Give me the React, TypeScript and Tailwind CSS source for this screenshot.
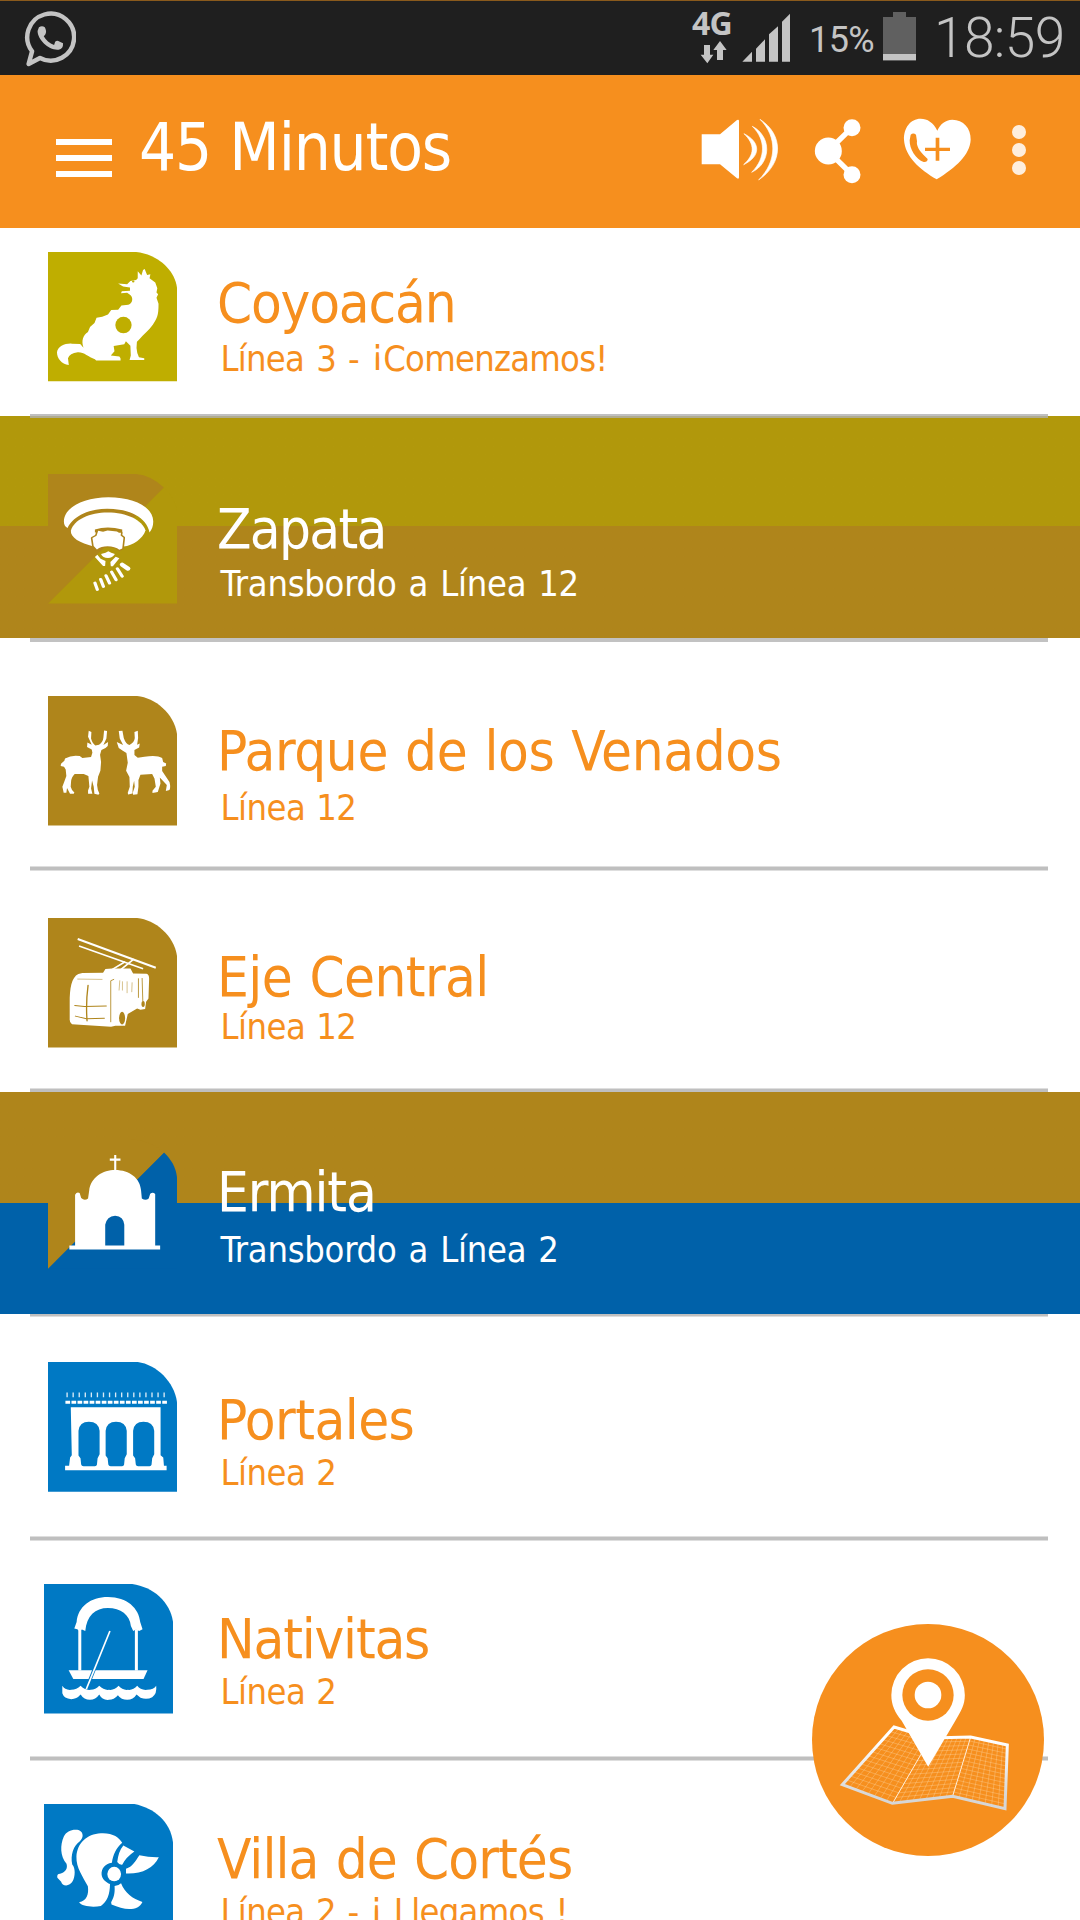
import type { ReactNode } from "react";

const GOLD = "#af851b";
const OLIVE = "#b1980b";
const NAVY = "#0061a9";
const BLUE = "#0079c4";
const ORANGE = "#f68f1e";

type Pt = [number, number];

function Tile({ box, children }: { box: string; children: ReactNode }) {
  return (
    <svg viewBox={box} preserveAspectRatio="none" className="block h-[129.500px] w-[129.500px]">
      {children}
    </svg>
  );
}

function CoyoteIcon() {
  return (
    <Tile box="117 96 317.5 390">
      <path d="M117 96H333C388 103 434 155 434 217V485H117Z" fill="#bfae00" />
      <path
        fill="#fff"
        d="M354 147L360 165L368 163L366 175L380 188L385 205L383 218L387 223L383 234L388 252C388 290 384 296 374 315C364 333 352 342 340 360L335 366L334 385Q335 402 340 413L353 416V421H317L320 408L319 378L308 365L304 374L278 379L280 395L271 408L292 411Q296 415 295 423H235L232 419C216 412 205 397 190 398Q170 401 166 416L168 436C150 434 139 416 139 398C141 380 158 371 175 372L196 373L204 384C198 363 203 347 215 337L220 322L231 310L236 294L250 291L264 284L272 271L289 270L297 257L314 255C326 250 326 232 318 225L311 219L296 220L298 214L318 213V203L301 200L289 191L311 193L319 183L333 180L337 175V154L346 167L350 150Z"
      />
      <ellipse cx="302" cy="316" rx="20" ry="25" fill="#bfae00" />
      <circle cx="326" cy="185" r="3" fill="#bfae00" />
    </Tile>
  );
}

const FACE =
  "M240 272L252 275L263 271L286 274L291 278H296L295 286L302 293L299 325L292 329C280 316 250 314 237 328L229 318L226 294L236 287Z";

function ZapataIcon() {
  return (
    <Tile box="117 101 317.5 390">
      <path d="M401 142C425 170 434 200 434 222V491H117Z" fill={OLIVE} />
      <path d="M117 101H333Q370 105 401 142L117 491Z" fill={GOLD} />
      <g fill="#fff">
        <path d="M156 245C155 202 205 171 265 171C330 171 376 202 375 245C375 258 372 268 366 277C358 232 318 206 262 206C210 206 175 235 165 264C158 260 156 252 156 245Z" />
        <path d="M173 272C180 238 220 217 263 217C310 217 348 240 356 271C350 295 325 317 302 319L229 319C195 310 172 292 173 272Z" />
      </g>
      <path d={FACE} fill={GOLD} stroke={GOLD} strokeWidth="8" strokeLinejoin="round" />
      <path d="M232 268Q262 256 299 268V277H232Z" fill={GOLD} />
      <g fill="#fff">
        <path d={FACE} />
        <path d="M247 342L258 338L265 334L272 338L281 342Q275 354 264 354Q251 354 247 342Z" />
        <path d="M232 351L238 344L246 356L258 363L257 378L252 378Z" />
        <path d="M283 350L292 355L276 379H271L270 366Z" />
      </g>
      <g stroke="#fff" strokeWidth="8" strokeLinecap="round">
        <path d="M232 429L238 449M246 418L253 440M259 407L268 430M273 396L284 420M287 386L299 409" />
        <path d="M299 374L313 386" strokeWidth="12" />
      </g>
    </Tile>
  );
}

function DeerIcon() {
  return (
    <Tile box="143 78 388 388">
      <path d="M143 78H410C470 84 531 140 531 210V466H143Z" fill={GOLD} />
      <g fill="#fff">
        <path d="M265 182L273 186L272 205Q276 220 285 226L296 224Q308 215 309 202L311 181L320 183L318 205L309 225L323 216L322 228Q316 236 303 240L299 254L302 276L300 302L293 320L290 345Q291 361 297 370L294 374L282 371L280 350L275 331L272 355L276 371H263V361L267 350L264 318L250 312H223Q213 321 212 336L211 350Q214 362 222 367L220 371H209L200 354L198 368H190L186 350L192 334L198 318L196 298L191 290L181 288L182 281L192 272L194 265Q215 254 238 258L246 264L272 261L276 248L274 238L260 231L261 217L274 224L263 200Z" />
        <path d="M355 183L366 182L370 204Q376 222 387 225Q402 217 403 204L402 186L412 182L413 204L410 224L418 220L416 232L402 240L402 255L412 263L432 260Q470 254 485 264L488 276L497 280L496 288L485 290V303L498 322L507 336Q511 352 507 360L496 363L499 345L478 322L480 340L472 366L456 369V362L466 350L462 325L455 312L420 314L414 330V350L411 372L398 374L397 368L403 350L401 332L397 350L396 370L383 373L382 368L388 350L387 321L377 302L382 278L378 249L366 241L355 234L349 216L368 225L358 205Z" />
      </g>
    </Tile>
  );
}

function BusIcon() {
  return (
    <Tile box="143 84 388 388">
      <path d="M143 84H410C470 90 531 146 531 216V472H143Z" fill={GOLD} />
      <g stroke="#fff" fill="none">
        <path d="M232 147L466 233" strokeWidth="6" />
        <path d="M236 168L428 236" strokeWidth="5" />
        <path d="M400 207L362 238M374 215L336 238" strokeWidth="5" />
      </g>
      <path
        fill="#fff"
        d="M208 338C208 296 213 262 234 252L246 249L308 248L315 237L335 235H390L398 250L438 251Q446 253 446 266L444 325L437 335L434 357L420 359L410 355L382 372L374 407H345L332 410L215 402Q207 398 208 385Z"
      />
      <g stroke={GOLD} fill="none" strokeLinecap="round">
        <path d="M263 286Q256 340 260 392" strokeWidth="4" />
        <path d="M223 346L252 349L318 348M225 378L258 386L312 384" strokeWidth="3" />
        <path d="M232 267L305 268" strokeWidth="1.5" />
        <path d="M340 268L331 272V395" strokeWidth="2.5" />
        <path d="M358 272L356 300M366 275V300M380 275V308M395 278L394 305" strokeWidth="1.5" />
        <path d="M414 266V322M425 265L427 332" strokeWidth="2.5" />
      </g>
      <ellipse cx="365" cy="384" rx="9" ry="19" fill={GOLD} />
      <ellipse cx="428" cy="342" rx="5" ry="9" fill={GOLD} />
    </Tile>
  );
}

function ChapelIcon() {
  return (
    <Tile box="124 57 339.5 390">
      <path d="M428 98C450 122 463 150 463 188V447H124Z" fill={NAVY} />
      <path d="M124 57H340Q400 65 428 98L124 448Z" fill={GOLD} />
      <path
        fill="#fff"
        d="M297.500 152V105H303V152ZM286 115.500H314V122.500H286ZM180 378H195V225Q200 215 207 220L211 235Q220 244 229 236L232 212C236 172 268 150 300 150C338 150 366 175 368 212L370 236Q380 244 388 236L392 222Q399 216 405 223V378H418V390H180Z"
      />
      <path d="M274 378V315Q278 290 300 288Q322 290 324 315V378Z" fill={NAVY} />
    </Tile>
  );
}

function PortalesIcon() {
  return (
    <Tile box="144 97 386.500 386.500">
      <path d="M144 97H412C472 105 530 165 530 232V484H144Z" fill={BLUE} />
      <path d="M199 195H500" stroke="#fff" strokeOpacity="0.850" strokeWidth="14" strokeDasharray="4 14.100" />
      <path d="M196 217H499" stroke="#fff" strokeWidth="9" strokeDasharray="14 4.060" />
      <path
        d="M212 232H480V375L488 382L490 407H498V420H195V407H207L210 382L215 375Z"
        fill="#fff"
      />
      {[0, 81, 163].map((dx) => (
        <path
          key={dx}
          transform={`translate(${dx} 0)`}
          d="M235 302Q238 275 266 275Q295 275 298 302V372L292 384L290 404Q289 408 284 408H250Q244 408 243 403L241 384L235 376Z"
          fill={BLUE}
        />
      ))}
    </Tile>
  );
}

function BoatIcon() {
  return (
    <Tile box="130 72 389 389">
      <path d="M130 72H395C465 82 519 135 519 205V461H130Z" fill={BLUE} />
      <g fill="#fff">
        <path d="M221 206L228 186C232 140 270 111 322 111C380 111 415 145 419 186L426 208L416 213L406 209L398 213L391 198C388 165 360 144 322 144C284 144 258 168 254 213L244 209L236 213L230 208Z" />
        <path d="M233 208H242V332H233ZM403 208H412V332H403Z" />
        <path d="M204 331H441L429 357H218Z" />
        <path d="M185 378Q193 392 212 390Q228 390 240 378Q252 392 270 390Q285 390 296 378Q310 392 325 390Q342 392 354 378Q366 392 382 390Q398 392 410 378Q420 392 440 390Q460 390 467 378Q470 402 455 412Q440 420 420 414L408 404Q398 420 380 420Q362 420 352 406Q340 420 325 420Q305 422 296 404Q285 420 268 420Q250 420 240 404Q228 418 212 418Q190 416 185 400Z" />
      </g>
      <path d="M281 328L268 360" stroke={BLUE} strokeWidth="10" />
      <path d="M328 213L257 388" stroke="#fff" strokeWidth="5" />
    </Tile>
  );
}

function HelmetIcon() {
  return (
    <Tile box="113 192 339.500 390">
      <path d="M113 192H350C405 205 452 250 452 325V582H113Z" fill={BLUE} />
      <g fill="#fff">
        <path d="M205 271C217 277 217 294 207 304C190 318 182 345 187 374C196 385 195 410 188 425C180 442 160 440 158 426L148 414Q146 402 155 402C172 396 175 385 172 372C155 350 155 315 165 290C172 274 188 267 205 271Z" />
        <path d="M262 280C292 278 310 292 318 309C302 325 294 345 291 369C272 372 263 388 264 404C265 418 276 428 286 433C286 465 278 487 262 499C240 504 212 500 205 488C225 484 231 465 228 440C215 410 197 385 198 350C200 310 225 282 262 280Z" />
        <ellipse cx="297" cy="403" rx="18" ry="22" />
        <path d="M321 317L350 335Q328 352 318 375Q310 376 305 367Q308 335 321 317Z" />
        <path d="M363 346Q390 353 414 352C400 385 370 403 328 401L328 387C345 380 352 365 363 346Z" />
        <path d="M298 439Q310 438 315 431C325 460 345 478 371 487C360 515 325 513 290 495L289 488C298 470 299 455 298 439Z" />
      </g>
    </Tile>
  );
}

function StatusBar() {
  return (
    <div className="flex h-[75px] shrink-0 items-start border-t border-[#8a5a1c] bg-[#1f1f1f] text-[#c4c4c4]">
      <svg
        viewBox="72.6 30 151 171"
        preserveAspectRatio="none"
        className="ml-6 mt-[10px] h-[57px] w-[52px]"
        fill="#c4c4c4"
      >
        <path d="M96 151A68 70.500 0 1 1 119 171L86 189Z" fill="none" stroke="#c4c4c4" strokeWidth="13" strokeLinejoin="round" />
        <path d="M116 79Q125 72 133 79Q140 92 134 101L130 106C136 118 147 128 160 132L163 122Q168 118 172 120L186 127Q187 144 173 146C145 149 112 116 112 90Z" />
      </svg>
      <div className="ml-auto mt-[9px] flex w-[50px] flex-col">
        <span className="font-['Noto_Sans',sans-serif] text-[32px] font-bold leading-[26px] tracking-[-0.8px]">4G</span>
        <svg viewBox="120 120 84 72" className="ml-2 mt-1 h-6 w-7" fill="#c4c4c4">
          <path d="M132 135H150V164H160L142 190L122 164H132ZM171 180V150H160L180 123L200 150H189V180Z" />
        </svg>
      </div>
      <svg viewBox="246 39 147 147" className="mt-3 h-[49px] w-[49px]" fill="#c4c4c4">
        <path d="M247 185L276 155V185ZM288 185V146L315 118V185ZM327 185V103L354 79V185ZM366 185V65L390 41V185Z" />
      </svg>
      <span className="ml-[18px] mt-[17px] w-[74px] font-['Roboto',sans-serif] text-[36px] leading-[44px] tracking-[-0.6px]">15%</span>
      <div className="mt-[11px] flex w-[33px] flex-col items-center">
        <div className="h-[5px] w-[13px] bg-[#606060]" />
        <div className="flex h-11 w-full flex-col justify-end bg-[#606060] pb-px">
          <div className="h-[6px] bg-[#c4c4c4]" />
        </div>
      </div>
      <span className="ml-[18px] mt-[7px] w-[146px] font-['Roboto',sans-serif] text-[55px] font-light leading-[60px] tracking-[-0.6px]">
        18:59
      </span>
    </div>
  );
}

function Header() {
  return (
    <header className="flex h-[153px] shrink-0 items-start bg-[#f68f1e] pl-14 pr-[54px]">
      <div className="mt-16 flex w-14 flex-col gap-[10px]">
        <div className="h-[6px] bg-white" />
        <div className="h-[6px] bg-white" />
        <div className="h-[6px] bg-white" />
      </div>
      <h1 className="ml-[27px] mt-[35px] whitespace-nowrap text-[65px] leading-[76px] tracking-[-1.2px] text-white [word-spacing:1px]">
        45 Minutos
      </h1>
      <svg viewBox="120 355 240 190" className="ml-auto mt-[43px] h-[63.300px] w-20" fill="#fff">
        <path d="M125 404H180L231 361Q237 358 237 364V533Q237 539 231 536L180 494H125Z" />
        <path d="M252 402C303 428 303 470 251 495C284 465 286 435 252 402Z" stroke="#fff" strokeWidth="2" />
        <path d="M277 380C335 410 335 490 275 518C318 475 318 420 277 380Z" stroke="#fff" strokeWidth="2" />
        <path d="M300 359C371 405 371 490 296 541C352 485 352 410 300 359Z" stroke="#fff" strokeWidth="2" />
      </svg>
      <svg viewBox="459 352 150 204" className="ml-[33px] mt-[42px] h-[68px] w-[50px]" fill="#fff">
        <path d="M576 384L504 454L576 525" fill="none" stroke="#fff" strokeWidth="16" />
        <circle cx="505" cy="454" r="40.500" />
        <circle cx="576" cy="384" r="25.500" />
        <circle cx="576" cy="525" r="25.500" />
      </svg>
      <svg viewBox="729 352 207 192" className="ml-10 mt-[42px] h-16 w-[69px]">
        <path
          fill="#fff"
          d="M832 393C820 368 802 357 782 357C751 357 731 385 732 420C735 470 778 508 830 539C888 503 930 465 932 420C933 385 910 360 877 360C855 361 840 374 832 393Z"
        />
        <path d="M752 405Q760 398 768 405L771 425C768 438 780 456 790 465L803 478Q803 488 791 487C768 480 748 448 749 422Z" fill={ORANGE} />
        <path d="M827 414H838V483H827ZM795 444H870V454H795Z" fill={ORANGE} />
      </svg>
      <div className="ml-10 mt-[50px] flex w-[14px] flex-col gap-1">
        <div className="h-[14px] w-[14px] rounded-full bg-white/85" />
        <div className="h-[14px] w-[14px] rounded-full bg-white/85" />
        <div className="h-[14px] w-[14px] rounded-full bg-white/85" />
      </div>
    </header>
  );
}

type Station = {
  name: string;
  detail: ReactNode;
  icon: ReactNode;
  row: string;
  iconPos: string;
  textPos: string;
  nameStyle: string;
  detailStyle: string;
  divider?: string;
};

const THICK = "bottom-0 h-[5px] border-y border-[#dedede] bg-[#bfbfbf]";

/* Inverted exclamation mark raised to stand on the baseline. */
function Opening() {
  return <span className="relative -top-[7px]">¡</span>;
}

const stations: Station[] = [
  {
    name: "Coyoacán",
    detail: (
      <>
        Línea 3 - <Opening />Comenzamos!
      </>
    ),
    icon: <CoyoteIcon />,
    row: "h-[188px] text-[#f68f1e]",
    iconPos: "ml-[47.500px] mt-6",
    textPos: "ml-10 mt-[45px]",
    nameStyle: "tracking-[-1.2px]",
    detailStyle: "mt-2 tracking-[-0.75px] [word-spacing:2.5px]",
    divider: "-bottom-[2px] h-1 bg-[#b0b0b0]/80",
  },
  {
    name: "Zapata",
    detail: "Transbordo a Línea 12",
    icon: <ZapataIcon />,
    row: "h-[222px] text-white bg-linear-to-b from-[#b1980b] from-[110px] to-[#af851b] to-[110px]",
    iconPos: "ml-[47.500px] mt-[58px]",
    textPos: "ml-10 mt-[83px]",
    nameStyle: "tracking-[-1.7px]",
    detailStyle: "mt-[7px] tracking-[-0.25px] [word-spacing:2px]",
    divider: "-bottom-1 h-1 bg-[#c2c2c2]",
  },
  {
    name: "Parque de los Venados",
    detail: "Línea 12",
    icon: <DeerIcon />,
    row: "h-[233px] text-[#f68f1e]",
    iconPos: "ml-[47.500px] mt-[58px]",
    textPos: "ml-10 mt-[83px]",
    nameStyle: "tracking-[-0.4px] [word-spacing:1.500px]",
    detailStyle: "mt-[9px] tracking-[-0.5px] [word-spacing:1px]",
    divider: THICK,
  },
  {
    name: "Eje Central",
    detail: "Línea 12",
    icon: <BusIcon />,
    row: "h-[221px] text-[#f68f1e]",
    iconPos: "ml-[47.500px] mt-[47px]",
    textPos: "ml-10 mt-[76px]",
    nameStyle: "tracking-[-0.6px] [word-spacing:2px]",
    detailStyle: "mt-[2px] tracking-[-0.5px] [word-spacing:1px]",
    divider: "bottom-0 h-1 border-t border-[#dedede] bg-[#bfbfbf]",
  },
  {
    name: "Ermita",
    detail: "Transbordo a Línea 2",
    icon: <ChapelIcon />,
    row: "h-[222px] text-white bg-linear-to-b from-[#af851b] from-[111px] to-[#0061a9] to-[111px]",
    iconPos: "ml-[47.500px] mt-[47px]",
    textPos: "ml-10 mt-[70px]",
    nameStyle: "tracking-[-1.07px]",
    detailStyle: "mt-[10px] tracking-[-0.25px] [word-spacing:2px]",
    divider: "-bottom-[3px] h-[3px] border-b border-[#dedede] bg-[#bfbfbf]",
  },
  {
    name: "Portales",
    detail: "Línea 2",
    icon: <PortalesIcon />,
    row: "h-[227px] text-[#f68f1e]",
    iconPos: "ml-[47.500px] mt-12",
    textPos: "ml-10 mt-[76px]",
    nameStyle: "tracking-[-0.56px]",
    detailStyle: "mt-[5px] tracking-[-0.5px] [word-spacing:1px]",
    divider: THICK,
  },
  {
    name: "Nativitas",
    detail: "Línea 2",
    icon: <BoatIcon />,
    row: "h-[220px] text-[#f68f1e]",
    iconPos: "ml-[43.500px] mt-[43px]",
    textPos: "ml-11 mt-[68px]",
    nameStyle: "tracking-[-1.2px]",
    detailStyle: "mt-[5px] tracking-[-0.5px] [word-spacing:1px]",
    divider: THICK,
  },
  {
    name: "Villa de Cortés",
    detail: (
      <>
        Línea 2 - <Opening /> Llegamos !
      </>
    ),
    icon: <HelmetIcon />,
    row: "h-[159px] overflow-hidden text-[#f68f1e]",
    iconPos: "ml-[43.500px] mt-[43px]",
    textPos: "ml-11 mt-[68px]",
    nameStyle: "tracking-[-0.9px] [word-spacing:2px]",
    detailStyle: "mt-[5px] tracking-[-0.7px] [word-spacing:2px]",
  },
];

function StationRow({ s }: { s: Station }) {
  return (
    <li className={`relative flex shrink-0 items-start ${s.row}`}>
      <div className={`shrink-0 ${s.iconPos}`}>{s.icon}</div>
      <div className={`flex flex-col whitespace-nowrap ${s.textPos}`}>
        <span className={`text-[56px] leading-[60px] ${s.nameStyle}`}>{s.name}</span>
        <span className={`ml-[3.500px] text-[36px] leading-[36px] ${s.detailStyle}`}>{s.detail}</span>
      </div>
      {s.divider && <div className={`absolute left-[30px] right-8 z-10 ${s.divider}`} />}
    </li>
  );
}

/* Grid lines of one folded panel, interpolated between its four corners. */
function panelGrid(a: Pt, b: Pt, c: Pt, d: Pt, cols: number, rows: number) {
  const mix = (p: Pt, q: Pt, t: number): Pt => [p[0] + (q[0] - p[0]) * t, p[1] + (q[1] - p[1]) * t];
  const parts: string[] = [];
  for (let i = 1; i < cols; i++) {
    parts.push(`M${mix(a, b, i / cols).join(" ")}L${mix(d, c, i / cols).join(" ")}`);
  }
  for (let i = 1; i < rows; i++) {
    parts.push(`M${mix(a, d, i / rows).join(" ")}L${mix(b, c, i / rows).join(" ")}`);
  }
  return parts.join("");
}

function MapButton() {
  return (
    <button className="absolute bottom-16 right-9 z-20 h-[232px] w-[232px] rounded-full bg-[#f68f1e]">
      <svg viewBox="96 72 696 696" className="h-full w-full" fill="none">
        <defs>
          <linearGradient id="mapEdge" gradientUnits="userSpaceOnUse" x1="0" y1="380" x2="0" y2="625">
            <stop offset="0.150" stopColor="#fff" />
            <stop offset="0.850" stopColor="#d6d6d6" />
          </linearGradient>
        </defs>
        <g stroke="#ffe3bd" strokeOpacity="0.450" strokeWidth="2">
          <path d={panelGrid([342, 383], [452, 413], [340, 606], [192, 553], 8, 14)} />
          <path d={panelGrid([452, 413], [572, 411], [518, 588], [340, 606], 9, 14)} />
          <path d={panelGrid([572, 411], [682, 435], [674, 624], [518, 588], 8, 15)} />
        </g>
        <path d="M452 413L340 606M572 411L518 588" stroke="#fff0dc" strokeWidth="3" />
        <path
          d="M342 381L452 414L572 411L682 435L675 626L518 589L337 610L187 554Z"
          stroke="url(#mapEdge)"
          strokeWidth="9"
        />
        <path
          d="M444.500 500L365 362C345 338 334 315 334 285A110 110 0 0 1 554.500 285C554.500 315 543 334 526 362Z"
          fill="#fff"
        />
        <circle cx="444" cy="285" r="77" fill={ORANGE} />
        <circle cx="444" cy="285" r="40" fill="#fff" />
      </svg>
    </button>
  );
}

export default function App() {
  return (
    <div className="relative flex h-[1920px] w-[1080px] flex-col overflow-hidden bg-white font-['DejaVu_Sans_Condensed','DejaVu_Sans',sans-serif]">
      <StatusBar />
      <Header />
      <ul className="flex flex-col">
        {stations.map((s) => (
          <StationRow key={s.name} s={s} />
        ))}
      </ul>
      <MapButton />
    </div>
  );
}
